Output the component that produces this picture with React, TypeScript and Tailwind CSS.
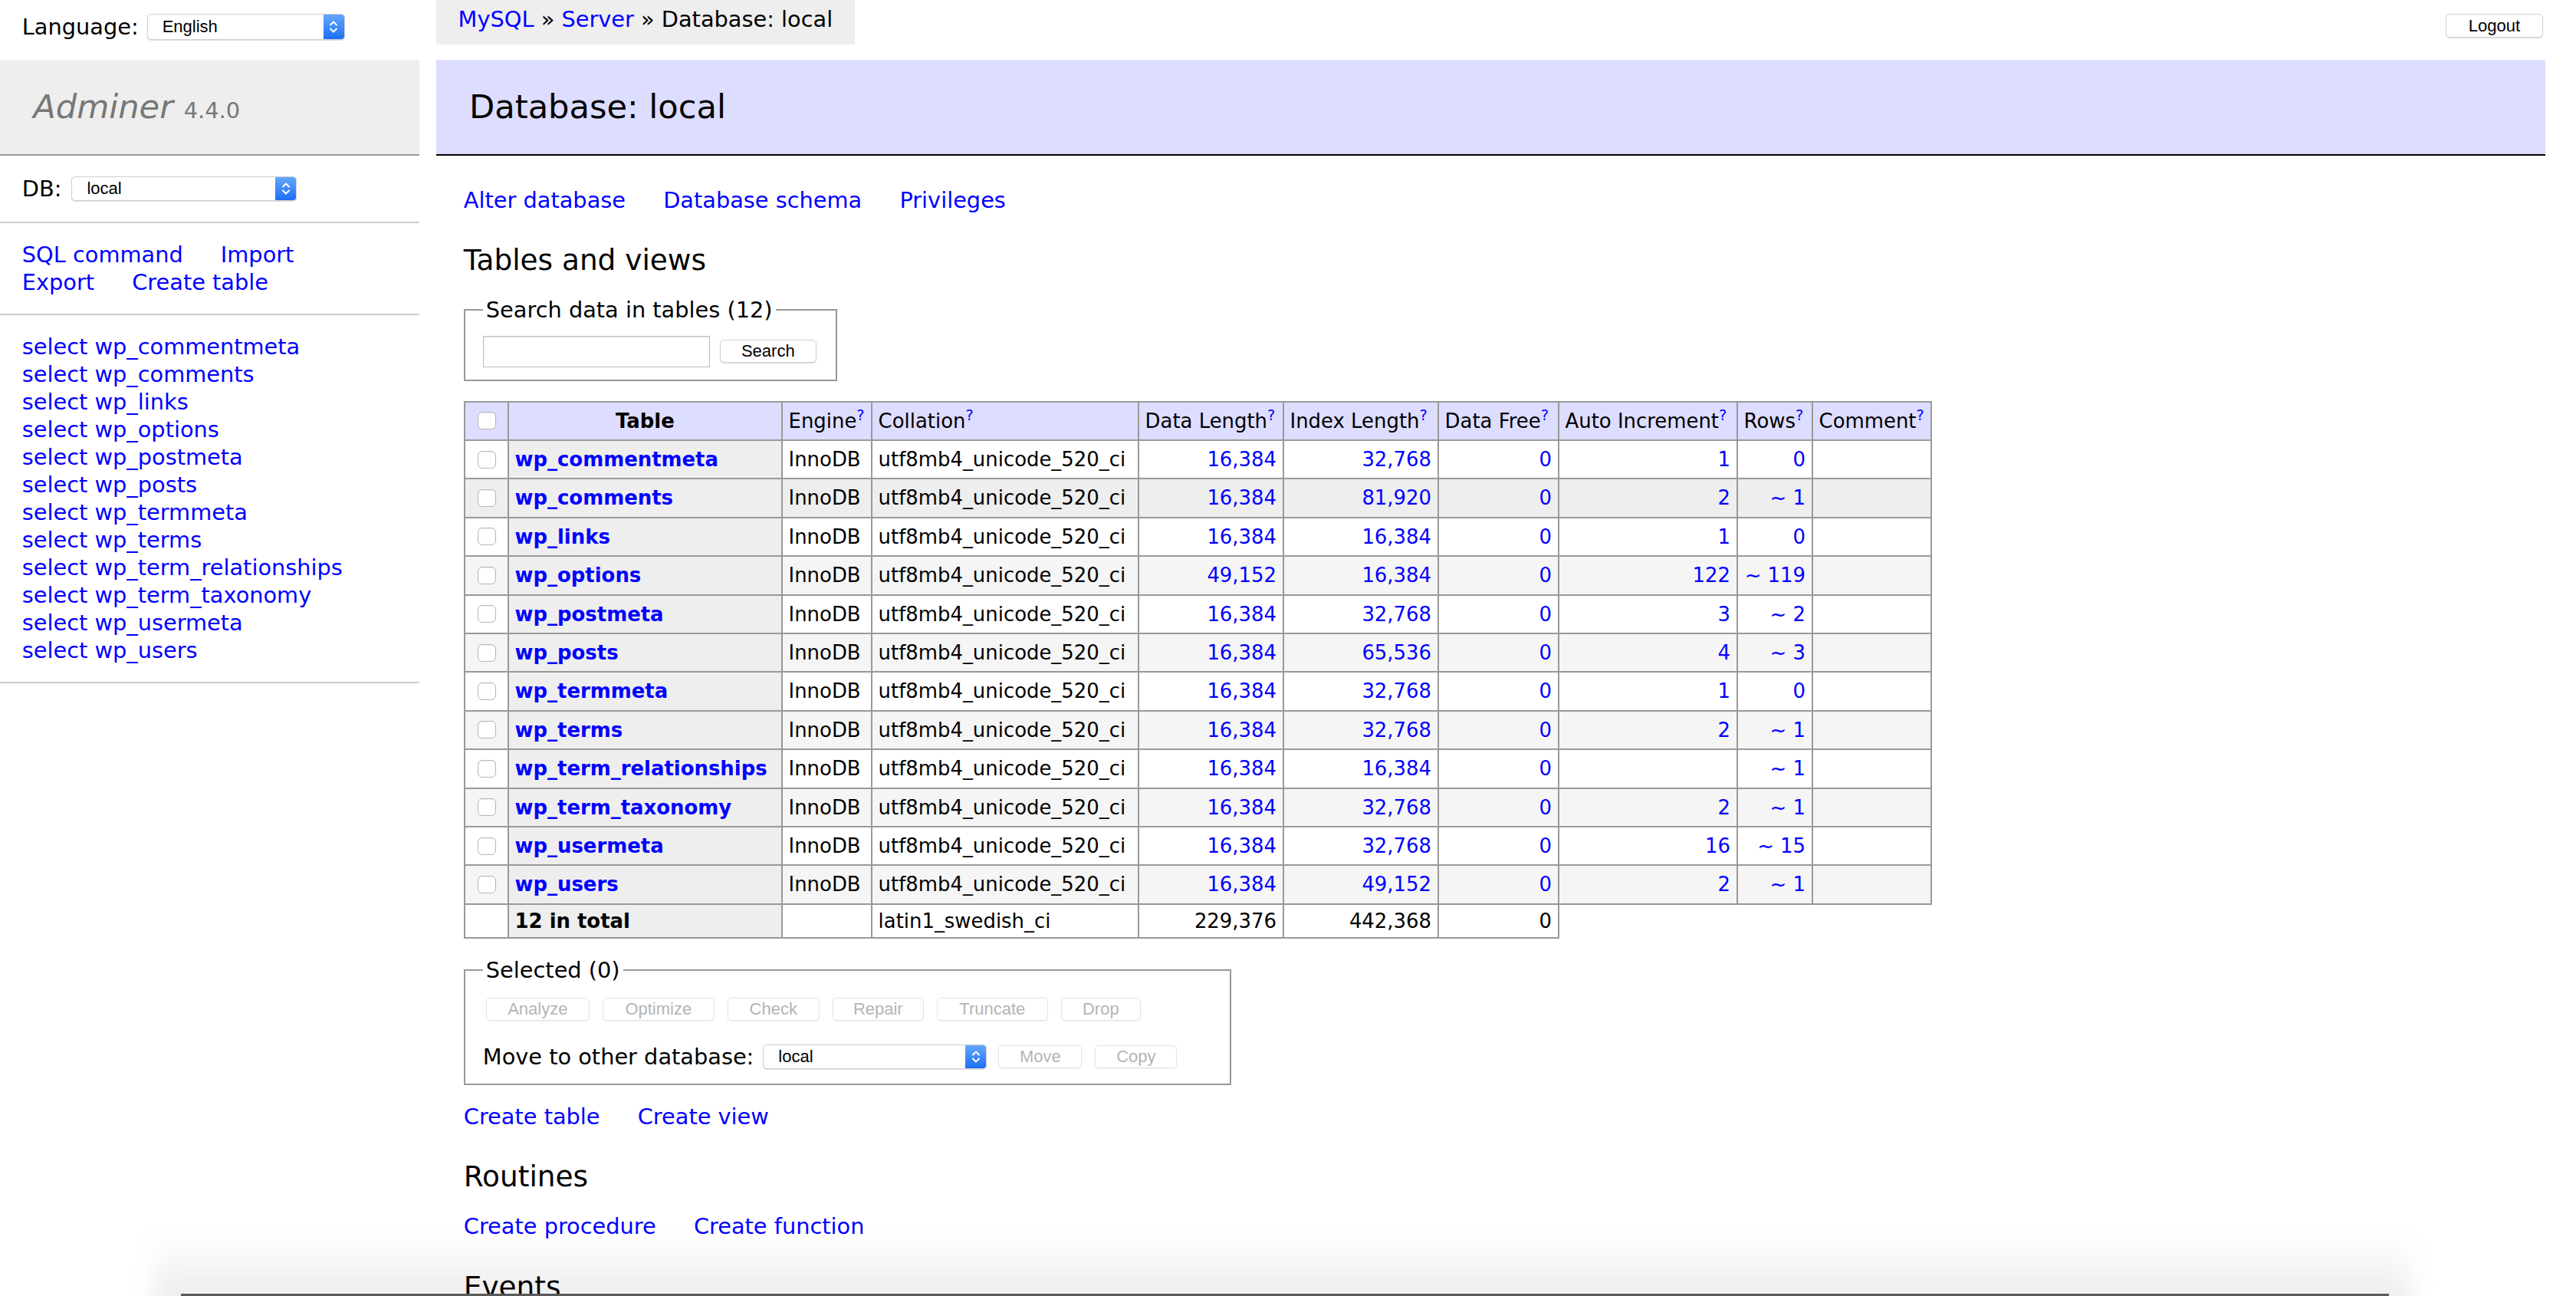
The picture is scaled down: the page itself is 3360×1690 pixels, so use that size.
import React from 'react'

type Row = { name: string; dl: string; il: string; ai: string; rows: string }

const tables: Row[] = [
  { name: 'wp_commentmeta', dl: '16,384', il: '32,768', ai: '1', rows: '0' },
  { name: 'wp_comments', dl: '16,384', il: '81,920', ai: '2', rows: '~ 1' },
  { name: 'wp_links', dl: '16,384', il: '16,384', ai: '1', rows: '0' },
  { name: 'wp_options', dl: '49,152', il: '16,384', ai: '122', rows: '~ 119' },
  { name: 'wp_postmeta', dl: '16,384', il: '32,768', ai: '3', rows: '~ 2' },
  { name: 'wp_posts', dl: '16,384', il: '65,536', ai: '4', rows: '~ 3' },
  { name: 'wp_termmeta', dl: '16,384', il: '32,768', ai: '1', rows: '0' },
  { name: 'wp_terms', dl: '16,384', il: '32,768', ai: '2', rows: '~ 1' },
  { name: 'wp_term_relationships', dl: '16,384', il: '16,384', ai: '', rows: '~ 1' },
  { name: 'wp_term_taxonomy', dl: '16,384', il: '32,768', ai: '2', rows: '~ 1' },
  { name: 'wp_usermeta', dl: '16,384', il: '32,768', ai: '16', rows: '~ 15' },
  { name: 'wp_users', dl: '16,384', il: '49,152', ai: '2', rows: '~ 1' },
]

const columns = [
  { label: 'Engine', w: 'w-[117px]' },
  { label: 'Collation', w: 'w-[348px]' },
  { label: 'Data Length', w: 'w-[189px]' },
  { label: 'Index Length', w: 'w-[202px]' },
  { label: 'Data Free', w: 'w-[157px]' },
  { label: 'Auto Increment', w: 'w-[233px]' },
  { label: 'Rows', w: 'w-[98px]' },
  { label: 'Comment', w: 'w-[155px]' },
]

function Chevrons() {
  return (
    <svg width="12" height="20" viewBox="0 0 12 20" fill="none" stroke="white" strokeWidth="2" strokeLinecap="round" strokeLinejoin="round">
      <path d="M2 7.5 L6 3.5 L10 7.5" />
      <path d="M2 12.5 L6 16.5 L10 12.5" />
    </svg>
  )
}

// macOS-style popup select
function Select({ value, size }: { value: string; size: string }) {
  return (
    <span className={`flex ${size} shrink-0 overflow-hidden rounded-[5px] border border-[#cfcfcf] bg-white shadow-[0_1px_1px_rgba(0,0,0,0.15)]`}>
      <span className="flex flex-1 items-center pl-[19px] font-['Liberation_Sans',Arial,sans-serif] text-[22px] leading-none text-black">
        {value}
      </span>
      <span className="flex w-[27px] items-center justify-center bg-gradient-to-b from-[#63a6fc] to-[#1b6ef5]">
        <Chevrons />
      </span>
    </span>
  )
}

function Button({ label, size, disabled }: { label: string; size: string; disabled?: boolean }) {
  return (
    <span
      className={`flex ${size} shrink-0 items-center justify-center rounded-[5px] border bg-white font-['Liberation_Sans',Arial,sans-serif] text-[22px] leading-none ${
        disabled
          ? 'border-[#e4e4e4] text-[#b4b4b4] shadow-[0_1px_1px_rgba(0,0,0,0.06)]'
          : 'border-[#d2d2d2] text-black shadow-[0_1px_1px_rgba(0,0,0,0.14)]'
      }`}
    >
      {label}
    </span>
  )
}

function Checkbox() {
  return (
    <span className="ml-[8px] mr-[6px] block h-[23px] w-[24px] rounded-[6px] border border-[#b5b5b5] bg-white shadow-[inset_0_1px_1px_rgba(0,0,0,0.06)]" />
  )
}

function Help() {
  return <sup className="text-[#00f]">?</sup>
}

function Links({ items, className = '' }: { items: string[]; className?: string }) {
  return (
    <p className={className}>
      {items.map((t, i) => (
        <React.Fragment key={t}>
          <a className="mr-[40px] whitespace-nowrap text-[#00f]">{t}</a>
          {i < items.length - 1 ? ' ' : null}
        </React.Fragment>
      ))}
    </p>
  )
}

function Sidebar() {
  return (
    <div className="w-[547px] shrink-0">
      <h1 className="border-b-2 border-[#999] bg-[#eee] px-[43.2px] py-[34.56px] text-[43.2px] leading-[54px] font-normal text-[#777]">
        <a className="italic text-[#777]">Adminer</a>{' '}
        <span className="text-[28.9px] leading-[36px]">4.4.0</span>
      </h1>
      <div className="flex h-[88px] items-center border-b-2 border-[#ccc] px-[28.8px]">
        DB:
        <div className="ml-[13px] flex">
          <Select value="local" size="w-[294px] h-[32px]" />
        </div>
      </div>
      <Links
        items={['SQL command', 'Import', 'Export', 'Create table']}
        className="border-b-2 border-[#ccc] px-[28.8px] py-[23px]"
      />
      <ul className="border-b-2 border-[#ccc] px-[28.8px] py-[23px] whitespace-nowrap">
        {tables.map(t => (
          <li key={t.name}>
            <a className="text-[#00f]">select</a> <a className="text-[#00f]">{t.name}</a>
          </li>
        ))}
      </ul>
    </div>
  )
}

function TablesTable() {
  const cell = 'border-2 border-[#999] px-[7.78px] py-[5.18px] whitespace-nowrap'
  return (
    <table className="mt-[25.92px] border-collapse text-[25.92px] leading-[32.4px]">
      <thead>
        <tr className="h-[50.4px]">
          <td className={`${cell} w-[57px] bg-[#ddf]`}>
            <Checkbox />
          </td>
          <th className="w-[357px] border-2 border-[#999] bg-[#ddf] px-[12.96px] py-[5.18px] text-center font-bold">
            Table
          </th>
          {columns.map(c => (
            <td key={c.label} className={`${cell} ${c.w} bg-[#ddf]`}>
              {c.label}
              <Help />
            </td>
          ))}
        </tr>
      </thead>
      <tbody>
        {tables.map((t, i) => {
          const bg = i === 1 ? 'bg-[#eee]' : i % 2 === 1 ? 'bg-[#f5f5f5]' : 'bg-white'
          return (
            <tr key={t.name} className="h-[50.4px]">
              <td className={`${cell} ${bg}`}>
                <Checkbox />
              </td>
              <th className={`${cell} bg-[#eee] text-left font-bold`}>
                <a className="text-[#00f]">{t.name}</a>
              </th>
              <td className={`${cell} ${bg}`}>InnoDB</td>
              <td className={`${cell} ${bg}`}>utf8mb4_unicode_520_ci</td>
              <td className={`${cell} ${bg} text-right text-[#00f]`}>{t.dl}</td>
              <td className={`${cell} ${bg} text-right text-[#00f]`}>{t.il}</td>
              <td className={`${cell} ${bg} text-right text-[#00f]`}>0</td>
              <td className={`${cell} ${bg} text-right text-[#00f]`}>{t.ai}</td>
              <td className={`${cell} ${bg} text-right text-[#00f]`}>{t.rows}</td>
              <td className={`${cell} ${bg}`}></td>
            </tr>
          )
        })}
        <tr>
          <td className={`${cell} bg-white`}></td>
          <th className={`${cell} bg-[#eee] text-left font-bold`}>12 in total</th>
          <td className={`${cell} bg-white`}></td>
          <td className={`${cell} bg-white`}>latin1_swedish_ci</td>
          <td className={`${cell} bg-white text-right`}>229,376</td>
          <td className={`${cell} bg-white text-right`}>442,368</td>
          <td className={`${cell} bg-white text-right`}>0</td>
        </tr>
      </tbody>
    </table>
  )
}

export default function App() {
  return (
    <div className="relative h-[1690px] w-[3360px] overflow-hidden bg-white font-['DejaVu_Sans',Verdana,sans-serif] text-[28.8px] leading-[36px] text-black">
      {/* soft window shadow behind the bottom of the page */}
      <div className="pointer-events-none absolute -bottom-[20px] left-[200px] right-[215px] z-0 h-[100px] bg-gradient-to-b from-white/0 to-[#e9e9e9] blur-[14px]" />

      <div className="relative z-[1]">
        {/* top strip: language, breadcrumb, logout */}
        <div className="flex h-[77.6px] items-start">
          <div className="mt-[8.64px] flex h-[51.84px] w-[568.8px] shrink-0 items-center pl-[28.8px]">
            Language:
            <div className="ml-[11px] flex">
              <Select value="English" size="w-[258px] h-[34px]" />
            </div>
          </div>
          <div className="h-[57.6px] whitespace-nowrap bg-[#eee] px-[28.8px] leading-[51.84px]">
            <a className="text-[#00f]">MySQL</a> » <a className="text-[#00f]">Server</a> » Database: local
          </div>
          <div className="flex-1" />
          <div className="mr-[43px] mt-[18px] flex">
            <Button label="Logout" size="w-[127px] h-[31px]" />
          </div>
        </div>

        <div className="flex items-start">
          <Sidebar />

          <div className="ml-[57.8px] flex-1 pr-[40px]">
            <h2 className="-ml-[36px] mb-[40px] border-b-2 border-black bg-[#ddf] px-[43.2px] py-[34.56px] text-[43.2px] leading-[54px] font-normal">
              Database: local
            </h2>
            <Links items={['Alter database', 'Database schema', 'Privileges']} />
            <h3 className="mt-[37.44px] text-[37.44px] leading-[46.8px] font-normal">Tables and views</h3>

            <fieldset className="mt-[23px] inline-block w-[487px] border-2 border-[#999] px-[23px] pt-[14.4px] pb-[14.4px] align-top">
              <legend className="px-[4px]">Search data in tables (12)</legend>
              <div className="flex h-[44px] items-center">
                <span className="block h-[41px] w-[296px] border border-[#bdbdbd] bg-white shadow-[inset_0_1px_2px_rgba(0,0,0,0.12)]" />
                <div className="ml-[13px] flex">
                  <Button label="Search" size="w-[126px] h-[30px]" />
                </div>
              </div>
            </fieldset>

            <TablesTable />

            <fieldset className="mt-[23px] block w-[1001px] border-2 border-[#999] px-[23px] pt-[14.4px] pb-[15px]">
              <legend className="px-[4px]">Selected (0)</legend>
              <div className="flex h-[36px] items-center gap-[17px] pl-[4px]">
                <Button label="Analyze" size="w-[135px] h-[30px]" disabled />
                <Button label="Optimize" size="w-[146px] h-[30px]" disabled />
                <Button label="Check" size="w-[120px] h-[30px]" disabled />
                <Button label="Repair" size="w-[119px] h-[30px]" disabled />
                <Button label="Truncate" size="w-[145px] h-[30px]" disabled />
                <Button label="Drop" size="w-[104px] h-[30px]" disabled />
              </div>
              <div className="mt-[24px] flex h-[40px] items-center">
                Move to other database:
                <div className="ml-[12px] flex">
                  <Select value="local" size="w-[292px] h-[32px]" />
                </div>
                <div className="ml-[15px] flex">
                  <Button label="Move" size="w-[109px] h-[30px]" disabled />
                </div>
                <div className="ml-[17px] flex">
                  <Button label="Copy" size="w-[107px] h-[30px]" disabled />
                </div>
              </div>
            </fieldset>

            <Links items={['Create table', 'Create view']} className="mt-[23px]" />
            <h3 className="mt-[37.44px] text-[37.44px] leading-[46.8px] font-normal">Routines</h3>
            <Links items={['Create procedure', 'Create function']} className="mt-[23px]" />
            <h3 className="mt-[37.44px] text-[37.44px] leading-[46.8px] font-normal">Events</h3>
            <Links items={['Create event']} className="mt-[23px]" />
          </div>
        </div>
      </div>

      {/* dark edge along the very bottom */}
      <div className="pointer-events-none absolute bottom-0 left-[236px] right-[244px] z-[2] h-[3px] bg-[#5a5a5a]" />
    </div>
  )
}
